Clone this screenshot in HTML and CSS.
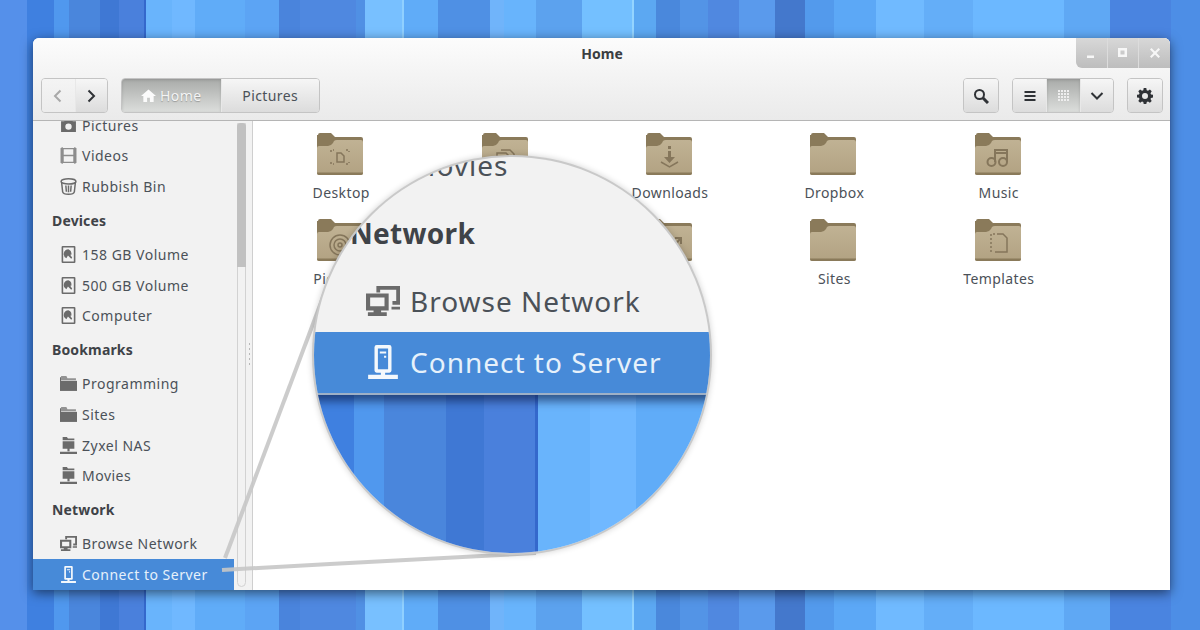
FILE: index.html
```html
<!DOCTYPE html>
<html lang="en">
<head>
<meta charset="utf-8">
<title>Files - Connect to Server</title>
<link rel="stylesheet" href="styles.css">
</head>
<body>
<svg class="defs" width="0" height="0" aria-hidden="true">
  <defs>
    <linearGradient id="fbody" x1="0" y1="0" x2="0" y2="1"><stop offset="0" stop-color="#c0b294"/><stop offset="1" stop-color="#b2a282"/></linearGradient>
    <symbol id="folder" viewBox="0 0 46 43">
      <path d="M1 3a2 2 0 0 1 2-2h11l4 4h26a2 2 0 0 1 2 2v12H0V3z" fill="#8a7a5a"/>
      <path d="M0 16q0-2 2-2h9q3 0 5-3l1-2q1-1 3-1h24q2 0 2 2v31q0 2-2 2H2q-2 0-2-2z" fill="url(#fbody)"/>
      <path d="M0 40.500h46v.5q0 2-2 2H2q-2 0-2-2z" fill="#8a7a5a"/>
    </symbol>
    <symbol id="i-camera" viewBox="0 0 16 16"><path fill-rule="evenodd" d="M1 4h3l1-2h6l1 2h3v10H1zM8 6a3 3 0 1 0 0 6 3 3 0 0 0 0-6z"/></symbol>
    <symbol id="i-film" viewBox="0 0 16 16"><path opacity=".75" d="M1.500 0h1v1h1v14h-1v1h-1v-1H.500V1h1zM13.500 0h1v1h1v14h-1v1h-1v-1h-1V1h1zM3.500 1h9v1.200h-9zM3.500 7.400h9v1.200h-9zM3.500 13.800h9V15h-9z"/></symbol>
    <symbol id="i-trash" viewBox="0 0 16 16"><g fill="none" stroke="#6b6b6b" stroke-width="1.400"><ellipse cx="8" cy="3.200" rx="7" ry="2.500"/><path d="M1.500 4l1 9q.5 2.300 5.500 2.300t5.500-2.300l1-9M5.500 7l.5 6M8 7v6.500M10.500 7l-.5 6"/></g></symbol>
    <symbol id="i-disk" viewBox="0 0 16 16"><path fill-rule="evenodd" d="M2.500 0h11q1 0 1 1v14q0 1-1 1h-11q-1 0-1-1V1q0-1 1-1zM3 1.500v13h10v-13zM8 3a4.500 4.500 0 0 0-2 8.500l1.500-2.500 3 3 1-1-2-3 1 .5A4.500 4.500 0 0 0 8 3z"/></symbol>
    <symbol id="i-dir" viewBox="0 0 16 16"><path d="M1 1h5l1 2h8v2H1z" opacity=".7"/><path d="M0 5.500h16V15H0z"/><path d="M0 2h1v4H0z"/></symbol>
    <symbol id="i-share" viewBox="0 0 16 16"><path d="M2.500 0h4l1 1.500h6V3h-11zM2.500 4h11v7h-11zM7 11h2v2.500H7zM0 13.800h16V16H0z"/></symbol>
    <symbol id="i-net" viewBox="0 0 18 16"><path fill-rule="evenodd" d="M0 4h12v9H8v1h3v2H1v-2h3v-1H0zM2.200 6.200v4.600h7.600V6.200zM5.500 0H18v10h-4V8h2V2H7.500v1.500h-2zM13.500 11H18v1.500h-4.500z"/></symbol>
    <symbol id="i-server" viewBox="0 0 16 16"><path fill-rule="evenodd" d="M5 0h6q1 0 1 1v11q0 1-1 1H9v1h6v2H1v-2h6v-1H5q-1 0-1-1V1q0-1 1-1zM5.600 1.600v9.800h4.800V1.600zM6.500 3h3v1h-3zM8.500 5h1v1h-1z"/></symbol>
    <symbol id="i-home" viewBox="0 0 16 16"><path d="M8 1.500 16 8.500h-2.500V15H9.500v-4.500h-3V15H2.500V8.500H0z"/></symbol>
    <symbol id="i-gear" viewBox="0 0 16 16"><path fill-rule="evenodd" d="M6.700 0h2.600l.4 2.200 1.300.5L12.900 1.500l1.800 1.800-1.200 1.900.5 1.200 2 .4v2.600l-2 .5-.5 1.200 1.200 1.800-1.800 1.800-1.900-1.200-1.200.5-.5 2H6.700l-.4-2-1.300-.5-1.800 1.200-1.900-1.800 1.200-1.900-.5-1.200L0 9.400V6.800l2-.4.500-1.200L1.300 3.300 3.100 1.500l1.900 1.200 1.300-.5zM8 5a3 3 0 1 0 0 6 3 3 0 0 0 0-6z"/></symbol>
  </defs>
</svg>

<div class="desktop">
  <main class="window">
    <header class="head">
      <div class="titlebar">
        <h1 class="title">Home</h1>
        <div class="wm">
          <span class="wm-btn"><svg viewBox="0 0 12 12" class="wm-ic"><path d="M2 8.500h7V11H2z"/></svg></span>
          <span class="wm-btn"><svg viewBox="0 0 12 12" class="wm-ic"><path fill-rule="evenodd" d="M1 1h9v9H1zM3.500 3.500v4h4v-4z"/></svg></span>
          <span class="wm-btn"><svg viewBox="0 0 12 12" class="wm-ic"><path d="M1 2.500 2.500 1 6 4.500 9.500 1 11 2.500 7.500 6 11 9.500 9.500 11 6 7.500 2.500 11 1 9.500 4.500 6z"/></svg></span>
        </div>
      </div>
      <div class="toolbar">
        <div class="group nav">
          <button class="btn off"><svg class="tool" viewBox="0 0 16 16"><path class="stroke" d="M10.500 2.500 5 8l5.500 5.500"/></svg></button>
          <button class="btn"><svg class="tool" viewBox="0 0 16 16"><path class="stroke" d="M5.500 2.500 11 8l-5.500 5.500"/></svg></button>
        </div>
        <div class="group path">
          <button class="btn active crumb"><svg class="home" viewBox="0 0 16 16"><use href="#i-home"/></svg>Home</button>
          <button class="btn crumb">Pictures</button>
        </div>
        <div class="spacer"></div>
        <div class="group"><button class="btn square"><svg class="tool" viewBox="0 0 16 16"><circle class="stroke" cx="6.500" cy="6.500" r="4.500"/><path class="stroke thick" d="M10 10l5 5"/></svg></button></div>
        <div class="group views">
          <button class="btn view"><svg class="tool" viewBox="0 0 16 16"><path d="M2.500 3h11v2h-11zM2.500 7h11v2h-11zM2.500 11h11v2h-11z"/></svg></button>
          <button class="btn view active"><svg class="tool dots" viewBox="0 0 12 12"><path d="M0 0h2v2H0zM3 0h2v2H3zM6 0h2v2H6zM9 0h2v2H9zM0 3h2v2H0zM3 3h2v2H3zM6 3h2v2H6zM9 3h2v2H9zM0 6h2v2H0zM3 6h2v2H3zM6 6h2v2H6zM9 6h2v2H9zM0 9h2v2H0zM3 9h2v2H3zM6 9h2v2H6zM9 9h2v2H9z"/></svg></button>
          <button class="btn view"><svg class="tool" viewBox="0 0 16 16"><path class="stroke" d="M2.500 5 8 10.500 13.500 5"/></svg></button>
        </div>
        <div class="group"><button class="btn square"><svg class="tool" viewBox="0 0 16 16"><use href="#i-gear"/></svg></button></div>
      </div>
    </header>

    <div class="body">
      <aside class="sidebar">
        <div class="list">
          <div class="row"><svg class="ic"><use href="#i-camera"/></svg>Pictures</div>
          <div class="row"><svg class="ic"><use href="#i-film"/></svg>Videos</div>
          <div class="row"><svg class="ic"><use href="#i-trash"/></svg>Rubbish Bin</div>
          <div class="section">Devices</div>
          <div class="row"><svg class="ic"><use href="#i-disk"/></svg>158 GB Volume</div>
          <div class="row"><svg class="ic"><use href="#i-disk"/></svg>500 GB Volume</div>
          <div class="row"><svg class="ic"><use href="#i-disk"/></svg>Computer</div>
          <div class="section">Bookmarks</div>
          <div class="row"><svg class="ic"><use href="#i-dir"/></svg>Programming</div>
          <div class="row"><svg class="ic"><use href="#i-dir"/></svg>Sites</div>
          <div class="row"><svg class="ic"><use href="#i-share"/></svg>Zyxel NAS</div>
          <div class="row"><svg class="ic"><use href="#i-share"/></svg>Movies</div>
          <div class="section">Network</div>
          <div class="row"><svg class="ic"><use href="#i-net"/></svg>Browse Network</div>
          <div class="row selected"><svg class="ic"><use href="#i-server"/></svg>Connect to Server</div>
        </div>
        <div class="trough"><div class="thumb"></div></div>
        <div class="grip"></div>
      </aside>
      <section class="files">
        <figure class="file"><svg class="fold" viewBox="0 0 46 43"><use href="#folder" width="46" height="43"/><path class="em-line dash" d="M14 20v-2h3M29 18h3v2M14 30v2h3M29 32h3v-2"/><path class="em-line" d="M20 21h4l3 3v6h-7z"/></svg><figcaption>Desktop</figcaption></figure>
        <figure class="file"><svg class="fold" viewBox="0 0 46 43"><use href="#folder" width="46" height="43"/><path class="em-line" d="M15 32V21h9l3 3v8zM19 18h9l4 4v7"/></svg><figcaption>Documents</figcaption></figure>
        <figure class="file"><svg class="fold" viewBox="0 0 46 43"><use href="#folder" width="46" height="43"/><path class="em-fill" d="M22 14h3v3h-3zM22 19h3v6h4l-5.500 6-5.500-6h4z"/><path class="em-line" d="M15 30l8.500 5 8.500-5"/></svg><figcaption>Downloads</figcaption></figure>
        <figure class="file"><svg class="fold" viewBox="0 0 46 43"><use href="#folder" width="46" height="43"/></svg><figcaption>Dropbox</figcaption></figure>
        <figure class="file"><svg class="fold" viewBox="0 0 46 43"><use href="#folder" width="46" height="43"/><path class="em-line wide" d="M20 30V18h12v12M20 21h12"/><circle class="em-line wide" cx="16.500" cy="30" r="4"/><circle class="em-line wide" cx="28" cy="30" r="4"/></svg><figcaption>Music</figcaption></figure>
        <figure class="file"><svg class="fold" viewBox="0 0 46 43"><use href="#folder" width="46" height="43"/><circle class="em-line" cx="23" cy="27" r="10"/><circle class="em-line" cx="23" cy="27" r="6"/><circle class="em-line" cx="23" cy="27" r="2"/></svg><figcaption>Pictures</figcaption></figure>
        <figure class="file"><svg class="fold" viewBox="0 0 46 43"><use href="#folder" width="46" height="43"/></svg><figcaption>Programming</figcaption></figure>
        <figure class="file"><svg class="fold" viewBox="0 0 46 43"><use href="#folder" width="46" height="43"/><path class="em-line wide" d="M26 30l9-10M29 20h6v6"/></svg><figcaption>Public</figcaption></figure>
        <figure class="file"><svg class="fold" viewBox="0 0 46 43"><use href="#folder" width="46" height="43"/></svg><figcaption>Sites</figcaption></figure>
        <figure class="file"><svg class="fold" viewBox="0 0 46 43"><use href="#folder" width="46" height="43"/><path class="em-line" d="M24 16h4l4 4v14H20"/><path class="em-line dash" d="M16 34V16h8"/></svg><figcaption>Templates</figcaption></figure>
      </section>
    </div>
  </main>

  <svg class="leader" viewBox="0 0 1200 630" aria-hidden="true">
    <path d="M225 558 325 292"/>
    <path d="M222 570 330 564 536 553"/>
  </svg>

  <div class="lens">
    <div class="lens-panel">
      <div class="list">
        <div class="row"><svg class="ic"><use href="#i-share"/></svg>Movies</div>
        <div class="section">Network</div>
        <div class="row"><svg class="ic"><use href="#i-net"/></svg>Browse Network</div>
        <div class="row selected"><svg class="ic"><use href="#i-server"/></svg>Connect to Server</div>
      </div>
    </div>
    <div class="lens-desk"></div>
  </div>
</div>
</body>
</html>
```
FILE: styles.css
```css
:root {
  --stripes: linear-gradient(90deg,
    #5590ea 0 2.25%, #3f80e0 2.25% 4.5%, #5098ee 4.5% 5.75%, #4a86dc 5.75% 8.33%,
    #3f78d4 8.33% 9.92%, #4a80dc 9.92% 12.04%, #3468cc 12.04% 12.17%, #69b4fc 12.17% 14.33%,
    #70b8ff 14.33% 16.25%, #60acf8 16.25% 20.42%, #5ca4f4 20.42% 23.25%, #4a84dc 23.25% 25%,
    #4f88e0 25% 29.67%, #5090e4 29.67% 30.42%, #78c0ff 30.42% 33.5%, #90d0ff 33.5% 33.67%,
    #60acf8 33.67% 36.5%, #4f90e4 36.5% 40.83%, #70b4fa 40.83% 42%, #68b4fc 42% 44.67%,
    #5ca2ee 44.67% 48.5%, #74c0ff 48.5% 52.67%, #94d4ff 52.67% 52.83%, #5ca8f2 52.83% 54.67%,
    #4a88dc 54.67% 56.67%, #5394e6 56.67% 59%, #5088e0 59% 61.58%, #5a9aec 61.58% 64.58%,
    #4478cc 64.58% 67.08%, #539aec 67.08% 69.5%, #5ca8f6 69.5% 73%, #70baff 73% 77%,
    #64aef8 77% 81.08%, #6cb8ff 81.08% 88.67%, #5fa8f4 88.67% 92.5%, #4a84e0 92.5% 97.58%,
    #4d8ee6 97.58% 100%);
}
* { box-sizing: border-box; }
html, body { margin: 0; height: 100%; overflow: hidden; }
body { font-family: "Noto Sans", "Open Sans", sans-serif; font-size: 14px; color: #4b5158; }
.defs { position: absolute; }
.desktop {
  position: relative;
  width: 1200px;
  height: 630px;
  padding: 38px 30px 40px 33px;
  background: var(--stripes);
}
.window {
  height: 100%;
  display: flex;
  flex-direction: column;
  background: #fff;
  border-radius: 6px 6px 0 0;
  overflow: hidden;
  box-shadow: 0 3px 12px rgba(0, 0, 0, .55);
}
.head {
  height: 83px;
  flex: none;
  display: flex;
  flex-direction: column;
  background: linear-gradient(#fcfcfc, #eaeaea);
  border-bottom: 1px solid #b5b5b5;
}
.titlebar { height: 30px; flex: none; display: flex; justify-content: flex-end; position: relative; }
.title {
  position: absolute;
  left: 0; right: 0; top: 6px;
  margin: 0;
  text-align: center;
  font-size: 14px;
  line-height: 20px;
  font-weight: 700;
  color: #3a3e42;
  padding-left: 1px;
}
.wm {
  display: flex;
  width: 94px;
  background: linear-gradient(#d8d8d8, #bdbdbd);
  border-bottom-left-radius: 6px;
}
.wm-btn { flex: 1; display: flex; align-items: center; justify-content: center; border-left: 1px solid #dcdcdc; }
.wm-btn:first-child { border-left: 0; }
.wm-ic { width: 12px; height: 12px; fill: #f7f7f7; }
.toolbar { flex: 1; display: flex; align-items: flex-start; padding: 10px 7px 0 8px; gap: 13px; }
.spacer { flex: 1; }
.group { display: flex; height: 35px; border: 1px solid #c4c4c4; border-radius: 4px; overflow: hidden; }
.btn {
  font: inherit;
  font-size: 14px;
  letter-spacing: .4px;
  color: #4b5158;
  border: 0;
  padding: 0;
  margin: 0;
  display: flex;
  align-items: center;
  justify-content: center;
  background: linear-gradient(#f6f6f6, #dcdcdc);
}
.btn + .btn { border-left: 1px solid #e8e8e8; }
.nav .btn { width: 32.500px; }
.nav .btn.off { background: linear-gradient(#f4f4f4, #ececec); color: #a9a9a9; }
.path .crumb { width: 98.500px; }
.btn.active { background: linear-gradient(#a9aba9, #dcdedc); color: #f4f4f4; text-shadow: 0 1px 1px rgba(0, 0, 0, .25); box-shadow: inset 0 1px 3px rgba(0, 0, 0, .15); }
.square { width: 34px; }
.view { width: 33.330px; }
.tool { width: 16px; height: 16px; fill: #2f3236; }
.off .tool { fill: #a9a9a9; }
.stroke { fill: none; stroke: #2f3236; stroke-width: 2; }
.off .stroke { stroke: #a9a9a9; }
.thick { stroke-width: 3; }
.dots { width: 12px; height: 12px; fill: #eeeeee; }
.home { width: 15px; height: 15px; fill: #fbfbfb; margin-right: 4px; }

.body { flex: 1; min-height: 0; display: flex; }
.sidebar {
  width: 220px;
  flex: none;
  display: flex;
  background: #f2f2f2;
  border-right: 1px solid #cfcfcf;
  position: relative;
}
.list {
  width: 201px;
  flex: none;
  display: flex;
  flex-direction: column;
  justify-content: flex-end;
  overflow: hidden;
  letter-spacing: .5px;
}
.row { height: 30.7px; flex: none; display: flex; align-items: center; padding-left: 27px; gap: 5px; white-space: nowrap; }
.section { height: 37.300px; flex: none; display: flex; align-items: center; padding-left: 19px; font-weight: 700; color: #3f4348; letter-spacing: .15px; }
.ic { width: 17px; height: 17px; flex: none; fill: #6b6b6b; }
.selected { background: #478ad8; color: #e6f1fb; }
.selected .ic { fill: #f4f8fc; }
.trough { width: 9px; margin: 2px 0 3px 3px; flex: none; border: 1px solid #d2d2d2; border-radius: 0 0 5px 5px; }
.thumb { height: 144px; margin: -1px; background: #c1c1c1; border-radius: 4px 4px 0 0; }
.grip {
  position: absolute;
  right: 2px;
  top: 222px;
  height: 25px;
  width: 1px;
  background: repeating-linear-gradient(#b8b8b8 0 2px, transparent 2px 5px);
}

.files {
  flex: 1;
  display: grid;
  grid-template-columns: repeat(5, 164.4px);
  grid-auto-rows: 86px;
  align-content: start;
  padding: 11px 0 0 6px;
}
.file { margin: 0; display: flex; flex-direction: column; align-items: center; gap: 8px; }
.fold { width: 46px; height: 43px; margin-right: 2px; }
figcaption { line-height: 20px; letter-spacing: .4px; }
.em-line { fill: none; stroke: #85765b; stroke-width: 1.500; }
.em-line.wide { stroke-width: 2; }
.em-line.dash { stroke-dasharray: 2 2; }
.em-fill { fill: #85765b; }

.leader { position: absolute; inset: 0; width: 1200px; height: 630px; pointer-events: none; }
.leader path { fill: none; stroke: #c6c6c6; stroke-width: 4; opacity: .9; }
.lens {
  position: absolute;
  left: 314px;
  top: 157px;
  width: 396px;
  height: 396px;
  border-radius: 50%;
  overflow: hidden;
  display: flex;
  flex-direction: column;
  background: #f2f2f2;
  box-shadow: 0 0 0 2px #c9c9c9, 0 0 6px 2px rgba(0, 0, 0, .18);
}
.lens-panel {
  zoom: 2;
  height: 118px;
  flex: none;
  margin-left: -1px;
  display: flex;
  flex-direction: column;
  justify-content: flex-end;
  overflow: hidden;
}
.lens-panel .list { overflow: visible; }
.lens-desk {
  flex: 1;
  background: var(--stripes);
  background-size: 2400px 100%;
  background-position: -68px 0;
  border-top: 2px solid #9eb0c6;
  box-shadow: inset 0 12px 10px -6px rgba(8, 20, 60, .6);
}
```
